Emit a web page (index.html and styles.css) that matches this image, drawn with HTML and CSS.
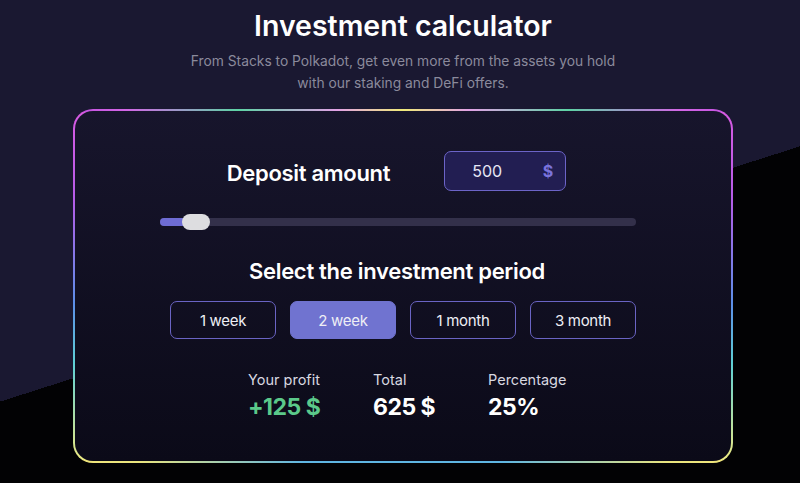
FILE: index.html
```html
<!DOCTYPE html>
<html lang="en">
<head>
    <meta charset="UTF-8">
    <meta name="viewport" content="width=device-width, initial-scale=1.0">
    <title>Investment calculator</title>
    <link rel="stylesheet" href="styles.css">
</head>
<body>
    <main class="page">
        <h1 class="title">Investment calculator</h1>
        <p class="subtitle">From Stacks to Polkadot, get even more from the assets you hold<br>with our staking and DeFi offers.</p>

        <div class="card-frame">
            <div class="card">
                <div class="deposit-row">
                    <h2 class="deposit-label">Deposit amount</h2>
                    <div class="amount-box">
                        <span class="amount-value">500</span>
                        <span class="amount-currency">$</span>
                    </div>
                </div>

                <div class="slider">
                    <div class="slider-fill"></div>
                    <div class="slider-thumb"></div>
                </div>

                <h3 class="period-title">Select the investment period</h3>
                <div class="periods">
                    <button class="period">1 week</button>
                    <button class="period active">2 week</button>
                    <button class="period">1 month</button>
                    <button class="period">3 month</button>
                </div>

                <div class="results">
                    <div class="result">
                        <div class="result-label">Your profit</div>
                        <div class="result-value profit">+125 $</div>
                    </div>
                    <div class="result">
                        <div class="result-label">Total</div>
                        <div class="result-value">625 $</div>
                    </div>
                    <div class="result">
                        <div class="result-label">Percentage</div>
                        <div class="result-value">25%</div>
                    </div>
                </div>
            </div>
        </div>
    </main>
</body>
</html>
```

FILE: styles.css
```css
body {
    font-family: Inter, "Noto Sans", sans-serif;
    margin: 0;
    min-height: 100vh;
    color: #fff;
    background: linear-gradient(162.3deg, #1a1831 54.4%, #020204 54.4%);
}
.page {
    display: flex;
    flex-direction: column;
    align-items: center;
    padding-left: 6px;
}
.title {
    margin: 8px 0 0;
    font-size: 28.5px;
    line-height: 36px;
    font-weight: 600;
}
.subtitle {
    margin: 6px 0 0;
    font-size: 13.8px;
    line-height: 22px;
    color: #8b8a9c;
    text-align: center;
}
.card-frame {
    margin-top: 15px;
    width: 660px;
    padding: 2px;
    box-sizing: border-box;
    border-radius: 20px;
    background:
        linear-gradient(90deg, #c24fe0 0%, #d366e6 8%, #5ed3a5 25%, #e2a2e6 40%, #f0ea7a 50%, #e2a2e6 60%, #5ed3a5 75%, #d366e6 92%, #c24fe0 100%) top / 100% 3px no-repeat,
        linear-gradient(90deg, #f1e57a 0%, #e9e47e 10%, #5fb6e2 35%, #5fb6e2 65%, #e9e47e 90%, #f1e57a 100%) bottom / 100% 3px no-repeat,
        linear-gradient(180deg, #d85ae2 0%, #b65ce8 25%, #5c8fe8 55%, #5fd0d5 72%, #f0ea80 100%);
}
.card {
    height: 350px;
    box-sizing: border-box;
    padding-top: 40px;
    border-radius: 18px;
    background: linear-gradient(180deg, #17152c 0%, #0b0a18 100%);
    display: flex;
    flex-direction: column;
    align-items: center;
}
.deposit-row {
    display: flex;
    align-items: center;
    gap: 54px;
    height: 40px;
    padding-right: 13px;
}
.deposit-label {
    margin: 4px 0 0;
    font-size: 22px;
    font-weight: 600;
    letter-spacing: -0.3px;
}
.amount-box {
    width: 122px;
    height: 40px;
    box-sizing: border-box;
    display: flex;
    align-items: center;
    padding: 0 12px 0 27px;
    border: 1px solid #6c64c8;
    border-radius: 7px;
    background: #221e52;
}
.amount-value {
    flex: 1;
    font-size: 16px;
    color: #e6e6f5;
}
.amount-currency {
    font-size: 16px;
    font-weight: 700;
    color: #7a73dc;
}
.slider {
    position: relative;
    width: 476px;
    height: 8px;
    margin: 27px 10px 0 0;
    border-radius: 4px;
    background: #33304a;
}
.slider-fill {
    width: 26px;
    height: 100%;
    border-radius: 4px;
    background: #6e6cd4;
}
.slider-thumb {
    position: absolute;
    left: 22px;
    top: -4px;
    width: 28px;
    height: 16px;
    border-radius: 8px;
    background: #dddde0;
}
.period-title {
    margin: 32px 12px 0 0;
    font-size: 22px;
    line-height: 26px;
    font-weight: 600;
    letter-spacing: -0.3px;
}
.periods {
    display: flex;
    gap: 14px;
    margin-top: 17px;
}
.period {
    width: 106px;
    height: 38px;
    border: 1px solid #6a64c4;
    border-radius: 7px;
    background: transparent;
    color: #eeeef5;
    font-family: inherit;
    font-size: 15px;
    letter-spacing: -0.3px;
    cursor: pointer;
}
.period.active {
    background: #7073d0;
    border-color: #7073d0;
}
.results {
    display: grid;
    grid-template-columns: 125px 115px 82px;
    margin: 31px 0 0 12px;
}
.result-label {
    font-size: 14.5px;
    line-height: 20px;
    color: #d8d8e0;
}
.result-value {
    margin-top: 3px;
    font-size: 23px;
    line-height: 28px;
    font-weight: 700;
    letter-spacing: -0.5px;
}
.result-value.profit {
    color: #5bc98a;
}
```
